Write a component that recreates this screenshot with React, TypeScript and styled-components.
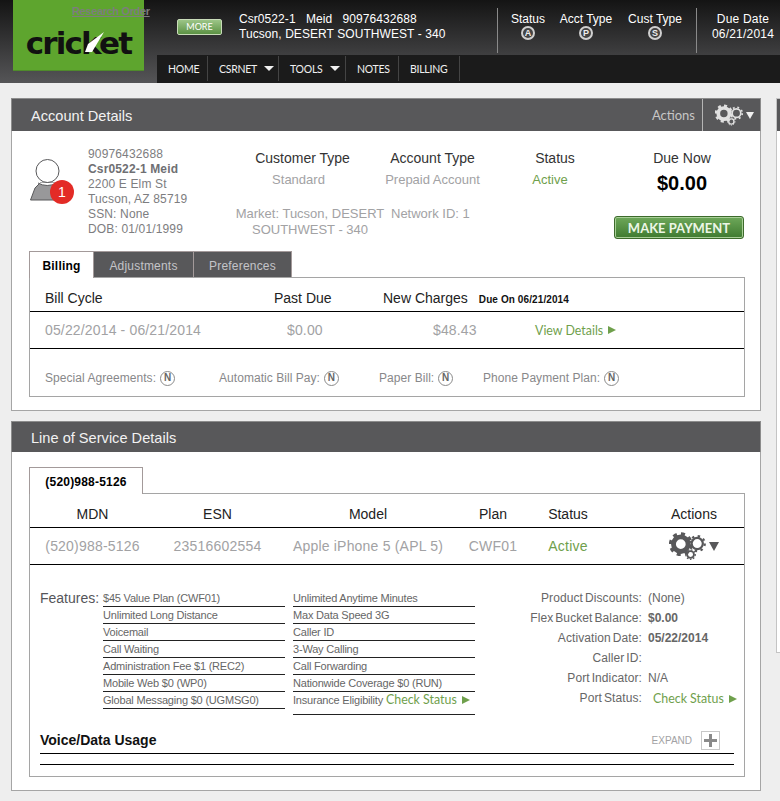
import React from "react";
import styled, { createGlobalStyle } from "styled-components";

const GlobalStyle = createGlobalStyle`
  * { box-sizing: border-box; }
  html, body { margin: 0; padding: 0; height: 100%; overflow: hidden; background: #eeeeee; }
  body { font-family: "Liberation Sans", Arial, sans-serif; color: #222; }
`;

function Gears({ color, width, height }: { color: string; width: number; height: number }) {
  return (
    <svg width={width} height={height} viewBox="0 0 30 23" fill="none">
      <circle cx="9.5" cy="10" r="6" stroke={color} strokeWidth="4" />
      <circle cx="9.5" cy="10" r="8.3" stroke={color} strokeWidth="3" strokeDasharray="3.2 3.3" />
      <circle cx="23" cy="9.5" r="4.6" stroke={color} strokeWidth="1.8" />
      <circle cx="23" cy="9.5" r="6.2" stroke={color} strokeWidth="1.8" strokeDasharray="2 2.9" />
      <circle cx="17.5" cy="18.5" r="2.8" stroke={color} strokeWidth="1.5" />
      <circle cx="17.5" cy="18.5" r="3.9" stroke={color} strokeWidth="1" strokeDasharray="1.3 1.3" />
    </svg>
  );
}

function Person() {
  return (
    <svg width="30" height="44" viewBox="0 0 30 44" fill="none">
      <circle cx="17.5" cy="12" r="11.5" fill="#fff" stroke="#58585a" strokeWidth="1" />
      <path d="M10 24 L25 24 L27 28 L27 41 L0.5 41 L5 29 Z" fill="#98989a" stroke="#58585a" strokeWidth="1" />
      <path d="M8 24 Q17 29 27 24" fill="#fff" stroke="#58585a" strokeWidth="1" />
    </svg>
  );
}

const Page = styled.div`
  width: 780px;
  height: 801px;
  overflow: hidden;
`;

const Header = styled.header`
  position: relative;
  display: flex;
  height: 83px;
  padding-left: 13px;
  background: linear-gradient(#141414, #555557);
`;

const Logo = styled.div`
  display: flex;
  align-items: flex-end;
  justify-content: center;
  width: 131px;
  height: 71px;
  padding-bottom: 12px;
  background: #5ea52e;
  border-bottom: 1px solid #4f8a2b;
`;

const LogoWord = styled.span`
  position: relative;
  font-family: "DejaVu Sans", sans-serif;
  font-weight: 700;
  font-size: 31px;
  line-height: 30px;
  letter-spacing: -1.8px;
  color: #111;
`;

const LogoSlash = styled.svg`
  position: absolute;
  left: 59px;
  top: 4px;
`;

const ResearchLink = styled.a`
  position: absolute;
  left: 72px;
  top: 5px;
  font-size: 11px;
  line-height: 13px;
  font-weight: 700;
  letter-spacing: -0.35px;
  color: #7d7d7d;
  text-decoration: underline;
`;

const HeaderMain = styled.div`
  display: flex;
  flex-direction: column;
  flex: 1;
  margin-left: 13px;
`;

const InfoBar = styled.div`
  display: flex;
  height: 55px;
  color: #fff;
  font-size: 12px;
  line-height: 15px;
`;

const MoreButton = styled.button`
  width: 45px;
  height: 16px;
  margin: 19px 0 0 20px;
  padding: 0;
  border: 1px solid #c9dcb9;
  border-radius: 2px;
  background: linear-gradient(#9cc587, #5c9244);
  color: #fff;
  font-family: Lato, sans-serif;
  font-size: 9px;
  line-height: 14px;
`;

const Customer = styled.div`
  width: 258px;
  margin: 12px 0 0 17px;
  letter-spacing: 0.07px;
  white-space: pre;
`;

const CustomerLine = styled.div<{ $wide?: boolean }>`
  word-spacing: ${(p) => (p.$wide ? 1.75 : 0)}px;
`;

const Flags = styled.div`
  display: flex;
  width: 200px;
  height: 45px;
  margin-top: 8px;
  padding-top: 4px;
  border-left: 1px solid #8a8a8a;
  border-right: 1px solid #8a8a8a;
`;

const FlagCol = styled.div<{ $width: number }>`
  display: flex;
  flex-direction: column;
  align-items: center;
  width: ${(p) => p.$width}px;
`;

const LetterCircle = styled.span`
  display: flex;
  align-items: center;
  justify-content: center;
  width: 14px;
  height: 14px;
  margin-top: -1px;
  border: 2px solid #d0d0d0;
  border-radius: 50%;
  font-size: 9px;
  line-height: 10px;
  font-weight: 700;
  color: #eee;
  background: #444;
`;

const DueDate = styled.div`
  width: 82px;
  margin-top: 12px;
  padding-left: 10px;
  text-align: center;
  letter-spacing: 0.2px;
`;

const NavBar = styled.nav`
  display: flex;
  height: 28px;
  padding-top: 1px;
  background: #1b1b1b;
`;

const NavItem = styled.a<{ $width: number }>`
  display: flex;
  align-items: center;
  gap: 7px;
  width: ${(p) => p.$width}px;
  height: 25px;
  padding-left: 11px;
  border-right: 1px solid #444;
  color: #f0f0f0;
  font-family: Lato, sans-serif;
  font-size: 10.5px;
  letter-spacing: -0.25px;
`;

const Caret = styled.span`
  width: 0;
  height: 0;
  border-left: 5px solid transparent;
  border-right: 5px solid transparent;
  border-top: 5px solid #f0f0f0;
`;

const Content = styled.main`
  display: flex;
  gap: 15px;
  padding: 15px 0 0 11px;
`;

const Column = styled.div`
  display: flex;
  flex: none;
  flex-direction: column;
  gap: 10px;
  width: 750px;
`;

const SideColumn = styled.aside`
  flex: none;
  width: 200px;
  height: 555px;
  border: 1px solid #c4c4c4;
  background: #fff;
`;

const SideHead = styled.div`
  height: 32px;
  background: #58585a;
`;

const Panel = styled.section`
  border: 1px solid #a5a5a5;
  border-top: 0;
  background: #fff;
`;

const PanelHead = styled.div<{ $height: number; $drop: number }>`
  display: flex;
  align-items: center;
  justify-content: space-between;
  height: ${(p) => p.$height}px;
  margin: 0 -1px;
  padding: 0 0 0 19px;
  border: 1px solid #8c8c8c;
  border-bottom: 0;
  background: #58585a;
  color: #f2f2f2;
  font-size: 14.6px;
`;

const PanelTitle = styled.span<{ $drop: number }>`
  padding-top: ${(p) => p.$drop}px;
`;

const HeadActions = styled.div`
  display: flex;
  align-items: center;
  height: 100%;
  font-family: Lato, sans-serif;
  font-size: 13px;
  color: #c6c6c6;
`;

const GearButton = styled.div`
  display: flex;
  align-items: center;
  gap: 3px;
  width: 58px;
  height: 100%;
  margin-left: 7px;
  padding-left: 12px;
  border-left: 1px solid #b5b5b5;
`;

const Triangle = styled.span<{ $color: string; $size: number }>`
  width: 0;
  height: 0;
  border-left: ${(p) => p.$size * 0.6}px solid transparent;
  border-right: ${(p) => p.$size * 0.6}px solid transparent;
  border-top: ${(p) => p.$size}px solid ${(p) => p.$color};
`;

const Summary = styled.div`
  display: flex;
  height: 120px;
  padding: 16px 0 0 18px;
`;

const AvatarWrap = styled.div`
  position: relative;
  flex: none;
  width: 58px;
  padding-top: 12px;
`;

const AlertBadge = styled.span`
  position: absolute;
  left: 20px;
  top: 33px;
  display: flex;
  align-items: center;
  justify-content: center;
  width: 24px;
  height: 24px;
  border-radius: 50%;
  background: #e32b26;
  color: #fff;
  font-size: 14px;
`;

const AccountInfo = styled.div`
  flex: none;
  width: 147px;
  font-size: 12px;
  line-height: 15px;
  color: #7d7d80;
  letter-spacing: 0.15px;
  b { color: #6f6f73; }
`;

const SummaryGrid = styled.div`
  display: grid;
  grid-template-columns: 135px 125px 120px 134px;
  grid-template-rows: 58px auto;
`;

const SummaryCell = styled.div`
  text-align: center;
`;

const CellTitle = styled.div`
  font-size: 14px;
  line-height: 16px;
  color: #333;
  margin-top: 3px;
`;

const CellValue = styled.div<{ $active?: boolean; $shift?: number }>`
  margin-top: 6px;
  padding-right: ${(p) => p.$shift ?? 0}px;
  font-size: 13px;
  line-height: 16px;
  color: ${(p) => (p.$active ? "#6fa04c" : "#a2a2a4")};
`;

const Amount = styled.div`
  margin-top: 5px;
  font-size: 20px;
  line-height: 24px;
  font-weight: 700;
  color: #000;
`;

const MarketRow = styled.div`
  display: flex;
  grid-column: 1 / 4;
  font-size: 13px;
  line-height: 16px;
  color: #a2a2a4;
`;

const Market = styled.div`
  width: 150px;
  margin-top: 1px;
  text-align: center;
`;

const NetworkId = styled.div`
  margin: 1px 0 0 6px;
`;

const PayButton = styled.button`
  width: 130px;
  height: 23px;
  margin: 11px 0 0 -1px;
  padding: 0;
  border: 1px solid #3d6b2c;
  border-radius: 3px;
  box-shadow: inset 0 0 0 1px #a9cf98;
  background: linear-gradient(#6ea85a, #3f7a30);
  color: #ecf6e6;
  font-family: Lato, sans-serif;
  font-size: 13px;
  font-weight: 700;
`;

const TabBar = styled.div`
  display: flex;
  height: 27px;
  margin: 0 15px 0 17px;
  border-bottom: 1px solid #a5a5a5;
`;

const Tab = styled.div<{ $active?: boolean; $width: number }>`
  width: ${(p) => p.$width}px;
  height: ${(p) => (p.$active ? 27 : 26)}px;
  border: 1px solid #a39a9a;
  border-left-width: ${(p) => (p.$active ? 1 : 0)}px;
  border-bottom: 0;
  background: ${(p) => (p.$active ? "#fff" : "#58585a")};
  color: ${(p) => (p.$active ? "#000" : "#c4c4c8")};
  font-size: 12px;
  font-weight: ${(p) => (p.$active ? 700 : 400)};
  letter-spacing: 0.2px;
  line-height: 28px;
  text-align: center;
`;

const TabBox = styled.div<{ $height: number }>`
  height: ${(p) => p.$height}px;
  margin: 0 15px 0 17px;
  border: 1px solid #a5a5a5;
  border-top: 0;
  background: #fff;
`;

const BillHead = styled.div`
  display: grid;
  grid-template-columns: 229px 109px auto;
  height: 34px;
  padding: 12px 0 0 15px;
  border-bottom: 1px solid #000;
  font-size: 14px;
  line-height: 16px;
  color: #222;
`;

const DueOn = styled.small`
  margin-left: 11px;
  font-size: 10px;
  font-weight: 700;
  color: #111;
  letter-spacing: 0.1px;
`;

const BillRow = styled.div`
  display: grid;
  grid-template-columns: 242px 146px 102px auto;
  align-items: center;
  height: 37px;
  padding-left: 15px;
  border-bottom: 1px solid #000;
  font-size: 14px;
  letter-spacing: 0.15px;
  color: #a2a2a4;
`;

const GreenLink = styled.a`
  display: inline-flex;
  align-items: center;
  gap: 5px;
  font-family: Lato, sans-serif;
  font-size: 12.4px;
  letter-spacing: 0;
  color: #6fa04c;
  white-space: nowrap;
`;

const RightArrow = styled.span`
  width: 0;
  height: 0;
  border-top: 4px solid transparent;
  border-bottom: 4px solid transparent;
  border-left: 8px solid #6fa04c;
`;

const FlagsRow = styled.div`
  display: grid;
  grid-template-columns: 174px 160px 104px auto;
  padding: 21px 0 0 15px;
  font-size: 12px;
  line-height: 16px;
  letter-spacing: 0.05px;
  color: #88888a;
`;

const FlagItem = styled.span`
  display: flex;
  align-items: center;
  gap: 4px;
  white-space: nowrap;
`;

const NCircle = styled.span`
  display: flex;
  align-items: center;
  justify-content: center;
  width: 15px;
  height: 15px;
  border: 1px solid #8a8a8a;
  border-radius: 50%;
  font-size: 10px;
  font-weight: 700;
  color: #666;
`;

const LineTable = styled.div`
  display: grid;
  grid-template-columns: 125px 125px 176px 74px 76px 138px;
  justify-items: center;
  align-items: center;
`;

const LineHead = styled(LineTable)`
  height: 34px;
  padding-top: 7px;
  border-bottom: 1px solid #000;
  font-size: 14px;
  color: #222;
`;

const LineRow = styled(LineTable)`
  height: 37px;
  border-bottom: 1px solid #000;
  font-size: 14px;
  letter-spacing: 0.2px;
  color: #a2a2a4;
`;

const ActionsCell = styled.div`
  display: flex;
  align-items: center;
  gap: 3px;
  padding-left: 38px;
`;

const ActiveText = styled.span`
  color: #6fa04c;
`;

const Features = styled.div`
  display: flex;
  height: 153px;
  padding: 25px 0 0 10px;
`;

const FeaturesLabel = styled.div`
  flex: none;
  width: 63px;
  font-size: 14px;
  line-height: 17px;
  color: #55555a;
`;

const FeatureList = styled.ul`
  flex: none;
  width: 182px;
  margin: 0 8px 0 0;
  padding: 0;
  list-style: none;
`;

const FeatureItem = styled.li<{ $tall?: boolean }>`
  display: flex;
  align-items: flex-start;
  gap: 3px;
  height: ${(p) => (p.$tall ? 23 : 17)}px;
  border-bottom: 1px solid #222;
  font-size: 11px;
  line-height: 16px;
  color: #666;
  white-space: nowrap;
  letter-spacing: -0.2px;
`;

const Facts = styled.dl`
  display: grid;
  grid-template-columns: 159px auto;
  grid-auto-rows: 20px;
  column-gap: 6px;
  align-content: start;
  margin: 0;
  font-size: 12px;
  line-height: 17px;
  color: #666;
`;

const FactLabel = styled.dt`
  text-align: right;
  letter-spacing: 0.1px;
  word-spacing: -1.5px;
`;

const FactValue = styled.dd<{ $bold?: boolean; $indent?: boolean }>`
  margin: 0 0 0 ${(p) => (p.$indent ? 5 : 0)}px;
  font-weight: ${(p) => (p.$bold ? 700 : 400)};
  white-space: nowrap;
`;

const UsageHead = styled.div`
  display: flex;
  align-items: center;
  justify-content: space-between;
  height: 36px;
  margin: 0 10px;
  padding: 14px 0 5px;
  border-bottom: 1px solid #000;
`;

const UsageTitle = styled.div`
  font-size: 14px;
  font-weight: 700;
  color: #111;
`;

const Expand = styled.div`
  display: flex;
  align-items: center;
  gap: 9px;
  padding-right: 14px;
  font-size: 10px;
  color: #a2a2a4;
`;

const PlusBox = styled.span`
  display: flex;
  align-items: center;
  justify-content: center;
  width: 19px;
  height: 19px;
  border: 1px solid #c8c8c8;
`;

const UsageEnd = styled.div`
  height: 11px;
  margin: 0 10px;
  border-bottom: 1px solid #000;
`;

const Spacer = styled.div<{ $height: number }>`
  height: ${(p) => p.$height}px;
`;

const featuresA = [
  "$45 Value Plan (CWF01)",
  "Unlimited Long Distance",
  "Voicemail",
  "Call Waiting",
  "Administration Fee $1 (REC2)",
  "Mobile Web $0 (WP0)",
  "Global Messaging $0 (UGMSG0)",
];

const featuresB = [
  "Unlimited Anytime Minutes",
  "Max Data Speed 3G",
  "Caller ID",
  "3-Way Calling",
  "Call Forwarding",
  "Nationwide Coverage $0 (RUN)",
];

export default function App() {
  return (
    <Page>
      <GlobalStyle />
      <Header>
        <Logo>
          <LogoWord>
            cricket
            <LogoSlash width="20" height="21" viewBox="0 0 20 21">
              <path d="M19 0 L3 12 L0 20 L7 20 Z" fill="#fff" />
            </LogoSlash>
          </LogoWord>
        </Logo>
        <ResearchLink>Research Order</ResearchLink>
        <HeaderMain>
          <InfoBar>
            <MoreButton>MORE</MoreButton>
            <Customer>
              <CustomerLine $wide>{"Csr0522-1  Meid  90976432688"}</CustomerLine>
              <CustomerLine>Tucson, DESERT SOUTHWEST - 340</CustomerLine>
            </Customer>
            <Flags>
              <FlagCol $width={60}>Status<LetterCircle>A</LetterCircle></FlagCol>
              <FlagCol $width={56}>Acct Type<LetterCircle>P</LetterCircle></FlagCol>
              <FlagCol $width={82}>Cust Type<LetterCircle>S</LetterCircle></FlagCol>
            </Flags>
            <DueDate>
              Due Date
              <br />
              06/21/2014
            </DueDate>
          </InfoBar>
          <NavBar>
            <NavItem $width={51}>HOME</NavItem>
            <NavItem $width={71}>CSRNET <Caret /></NavItem>
            <NavItem $width={67}>TOOLS <Caret /></NavItem>
            <NavItem $width={53}>NOTES</NavItem>
            <NavItem $width={61}>BILLING</NavItem>
          </NavBar>
        </HeaderMain>
      </Header>
      <Content>
        <Column>
          <Panel>
            <PanelHead $height={33} $drop={1}>
              <PanelTitle $drop={1}>Account Details</PanelTitle>
              <HeadActions>
                Actions
                <GearButton>
                  <Gears color="#e0e0e0" width={28} height={22} />
                  <Triangle $color="#f0f0f0" $size={7} />
                </GearButton>
              </HeadActions>
            </PanelHead>
            <Summary>
              <AvatarWrap>
                <Person />
                <AlertBadge>1</AlertBadge>
              </AvatarWrap>
              <AccountInfo>
                90976432688
                <br />
                <b>Csr0522-1 Meid</b>
                <br />
                2200 E Elm St
                <br />
                Tucson, AZ 85719
                <br />
                SSN: None
                <br />
                DOB: 01/01/1999
              </AccountInfo>
              <SummaryGrid>
                <SummaryCell>
                  <CellTitle>Customer Type</CellTitle>
                  <CellValue $shift={8}>Standard</CellValue>
                </SummaryCell>
                <SummaryCell>
                  <CellTitle>Account Type</CellTitle>
                  <CellValue>Prepaid Account</CellValue>
                </SummaryCell>
                <SummaryCell>
                  <CellTitle>Status</CellTitle>
                  <CellValue $active $shift={10}>Active</CellValue>
                </SummaryCell>
                <SummaryCell>
                  <CellTitle>Due Now</CellTitle>
                  <Amount>$0.00</Amount>
                </SummaryCell>
                <MarketRow>
                  <Market>Market: Tucson, DESERT SOUTHWEST - 340</Market>
                  <NetworkId>Network ID: 1</NetworkId>
                </MarketRow>
                <div>
                  <PayButton>MAKE PAYMENT</PayButton>
                </div>
              </SummaryGrid>
            </Summary>
            <TabBar>
              <Tab $active $width={65}>Billing</Tab>
              <Tab $width={100}>Adjustments</Tab>
              <Tab $width={98}>Preferences</Tab>
            </TabBar>
            <TabBox $height={119}>
              <BillHead>
                <span>Bill Cycle</span>
                <span>Past Due</span>
                <span>
                  New Charges<DueOn>Due On 06/21/2014</DueOn>
                </span>
              </BillHead>
              <BillRow>
                <span>05/22/2014 - 06/21/2014</span>
                <span>$0.00</span>
                <span>$48.43</span>
                <GreenLink>View Details <RightArrow /></GreenLink>
              </BillRow>
              <FlagsRow>
                <FlagItem>Special Agreements: <NCircle>N</NCircle></FlagItem>
                <FlagItem>Automatic Bill Pay: <NCircle>N</NCircle></FlagItem>
                <FlagItem>Paper Bill: <NCircle>N</NCircle></FlagItem>
                <FlagItem>Phone Payment Plan: <NCircle>N</NCircle></FlagItem>
              </FlagsRow>
            </TabBox>
            <Spacer $height={13} />
          </Panel>
          <Panel>
            <PanelHead $height={31} $drop={2}>
              <PanelTitle $drop={2}>Line of Service Details</PanelTitle>
            </PanelHead>
            <Spacer $height={15} />
            <TabBar>
              <Tab $active $width={114}>(520)988-5126</Tab>
            </TabBar>
            <TabBox $height={283}>
              <LineHead>
                <span>MDN</span>
                <span>ESN</span>
                <span>Model</span>
                <span>Plan</span>
                <span>Status</span>
                <ActionsCell>Actions</ActionsCell>
              </LineHead>
              <LineRow>
                <span>(520)988-5126</span>
                <span>23516602554</span>
                <span>Apple iPhone 5 (APL 5)</span>
                <span>CWF01</span>
                <ActiveText>Active</ActiveText>
                <ActionsCell>
                  <Gears color="#58585a" width={37} height={28} />
                  <Triangle $color="#58585a" $size={9} />
                </ActionsCell>
              </LineRow>
              <Features>
                <FeaturesLabel>Features:</FeaturesLabel>
                <FeatureList>
                  {featuresA.map((f) => (
                    <FeatureItem key={f}>{f}</FeatureItem>
                  ))}
                </FeatureList>
                <FeatureList>
                  {featuresB.map((f) => (
                    <FeatureItem key={f}>{f}</FeatureItem>
                  ))}
                  <FeatureItem $tall>
                    Insurance Eligibility
                    <GreenLink>Check Status <RightArrow /></GreenLink>
                  </FeatureItem>
                </FeatureList>
                <Facts>
                  <FactLabel>Product Discounts:</FactLabel>
                  <FactValue>(None)</FactValue>
                  <FactLabel>Flex Bucket Balance:</FactLabel>
                  <FactValue $bold>$0.00</FactValue>
                  <FactLabel>Activation Date:</FactLabel>
                  <FactValue $bold>05/22/2014</FactValue>
                  <FactLabel>Caller ID:</FactLabel>
                  <FactValue />
                  <FactLabel>Port Indicator:</FactLabel>
                  <FactValue>N/A</FactValue>
                  <FactLabel>Port Status:</FactLabel>
                  <FactValue $indent>
                    <GreenLink>Check Status <RightArrow /></GreenLink>
                  </FactValue>
                </Facts>
              </Features>
              <UsageHead>
                <UsageTitle>Voice/Data Usage</UsageTitle>
                <Expand>
                  EXPAND
                  <PlusBox>
                    <svg width="13" height="13" viewBox="0 0 13 13">
                      <path d="M5 0h3v5h5v3H8v5H5V8H0V5h5z" fill="#8a8a8a" />
                    </svg>
                  </PlusBox>
                </Expand>
              </UsageHead>
              <UsageEnd />
            </TabBox>
            <Spacer $height={13} />
          </Panel>
        </Column>
        <SideColumn>
          <SideHead />
        </SideColumn>
      </Content>
    </Page>
  );
}
